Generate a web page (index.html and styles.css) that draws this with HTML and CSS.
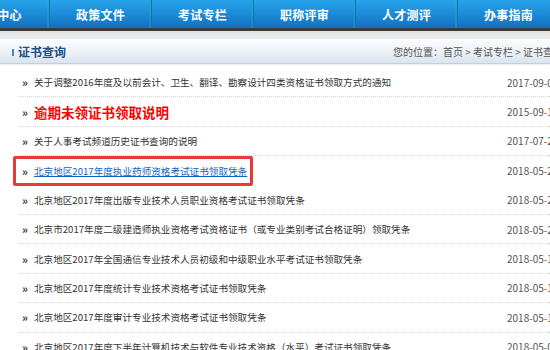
FILE: index.html
```html
<!DOCTYPE html>
<html lang="zh">
<head>
<meta charset="utf-8">
<title>证书查询</title>
<link rel="stylesheet" href="styles.css">
</head>
<body>
<div class="page">
  <nav class="nav">
    <a class="nav-item nav-first">中心</a>
    <a class="nav-item">政策文件</a>
    <a class="nav-item">考试专栏</a>
    <a class="nav-item">职称评审</a>
    <a class="nav-item">人才测评</a>
    <a class="nav-item">办事指南</a>
  </nav>
  <div class="band"></div>
  <div class="title-bar">
    <h2 class="title"><span class="title-mark"></span>证书查询</h2>
    <div class="crumbs">您的位置：首页 &gt; 考试专栏 &gt; 证书查询</div>
  </div>
  <ul class="list">
    <li class="row"><span class="arrow">»</span><a class="item">关于调整2016年度及以前会计、卫生、翻译、勘察设计四类资格证书领取方式的通知</a><span class="date">2017-09-01</span></li>
    <li class="row"><span class="arrow">»</span><a class="item item-red">逾期未领证书领取说明</a><span class="date">2015-09-11</span></li>
    <li class="row"><span class="arrow">»</span><a class="item">关于人事考试频道历史证书查询的说明</a><span class="date">2017-07-21</span></li>
    <li class="row row-hl"><span class="hl"><span class="arrow">»</span><a class="item item-link">北京地区2017年度执业药师资格考试证书领取凭条</a></span><span class="date">2018-05-21</span></li>
    <li class="row"><span class="arrow">»</span><a class="item">北京地区2017年度出版专业技术人员职业资格考试证书领取凭条</a><span class="date">2018-05-21</span></li>
    <li class="row"><span class="arrow">»</span><a class="item">北京市2017年度二级建造师执业资格考试资格证书（或专业类别考试合格证明）领取凭条</a><span class="date">2018-05-21</span></li>
    <li class="row"><span class="arrow">»</span><a class="item">北京地区2017年全国通信专业技术人员初级和中级职业水平考试证书领取凭条</a><span class="date">2018-05-18</span></li>
    <li class="row"><span class="arrow">»</span><a class="item">北京地区2017年度统计专业技术资格考试证书领取凭条</a><span class="date">2018-05-18</span></li>
    <li class="row"><span class="arrow">»</span><a class="item">北京地区2017年度审计专业技术资格考试证书领取凭条</a><span class="date">2018-05-18</span></li>
    <li class="row"><span class="arrow">»</span><a class="item">北京地区2017年度下半年计算机技术与软件专业技术资格（水平）考试证书领取凭条</a><span class="date">2018-05-09</span></li>
  </ul>
</div>
</body>
</html>
```
FILE: styles.css
```css
html, body {
  margin: 0;
  padding: 0;
  overflow: hidden;
  background: #ffffff;
}
.page {
  width: 550px;
  height: 350px;
  overflow: hidden;
  font-family: "Noto Sans CJK SC", "Noto Sans", sans-serif;
}
.nav {
  display: flex;
  height: 28px;
  margin-left: -30px;
  background: linear-gradient(#27a3ea, #1b88d5 55%, #1470bf);
  border-bottom: 3px solid #3b3b3b;
}
.nav-item {
  flex: 0 0 102px;
  box-sizing: border-box;
  display: flex;
  align-items: center;
  justify-content: center;
  color: #ffffff;
  font-weight: bold;
  font-size: 12px;
  letter-spacing: 0.2px;
  border-right: 1px solid #0b7aa8;
  box-shadow: inset -2px 0 0 rgba(40, 170, 210, 0.35);
  padding-top: 1px;
}
.nav-first {
  flex-basis: 80px;
}
.band {
  height: 8px;
  background: linear-gradient(#e2e2e2, #eeeeee);
}
.title-bar {
  display: flex;
  align-items: center;
  justify-content: space-between;
  height: 24px;
  background: linear-gradient(#fcfdff, #e9f0f7 60%, #d9e4ef);
  border-bottom: 1px solid #c7cfd7;
  box-shadow: 0 1px 2px rgba(0, 0, 0, 0.08);
}
.title {
  margin: 0;
  display: flex;
  align-items: center;
  padding-left: 12px;
  font-size: 12px;
  font-weight: bold;
  color: #1f4f86;
}
.title-mark {
  width: 2px;
  height: 7px;
  background: #4a86c4;
  margin-right: 4px;
  margin-top: 3px;
}
.crumbs {
  flex: 0 0 auto;
  width: 157px;
  white-space: nowrap;
  overflow: hidden;
  font-size: 10px;
  color: #555555;
  padding-top: 1px;
}
.list {
  list-style: none;
  margin: 0;
  padding: 4px 0 0 0;
}
.row {
  display: flex;
  align-items: center;
  height: 28.4px;
  border-bottom: 1px dotted #d6d6d6;
  margin-left: 19px;
}
.arrow {
  width: 12px;
  padding-left: 3px;
  font-size: 11px;
  font-weight: bold;
  color: #333333;
  flex: 0 0 auto;
}
.item {
  flex: 1 1 auto;
  min-width: 0;
  font-size: 9.6px;
  color: #333333;
  white-space: nowrap;
  overflow: hidden;
}
.item-red {
  color: #ff0000;
  font-size: 13.5px;
  font-weight: bold;
}
.row-hl {
  border-bottom: none;
  height: 29.4px;
}
.hl {
  flex: 0 0 240px;
  display: flex;
  align-items: center;
  height: 30px;
  box-sizing: border-box;
  margin-left: -6px;
  padding-left: 6px;
  border: 3px solid #e8393b;
  border-radius: 2px;
}
.hl .arrow {
  margin-left: -3px;
}
.item-link {
  color: #1565c4;
  text-decoration: underline;
}
.date {
  flex: 0 0 52px;
  margin-left: auto;
  margin-right: -9px;
  font-size: 10px;
  color: #555555;
  white-space: nowrap;
  overflow: hidden;
}
```
